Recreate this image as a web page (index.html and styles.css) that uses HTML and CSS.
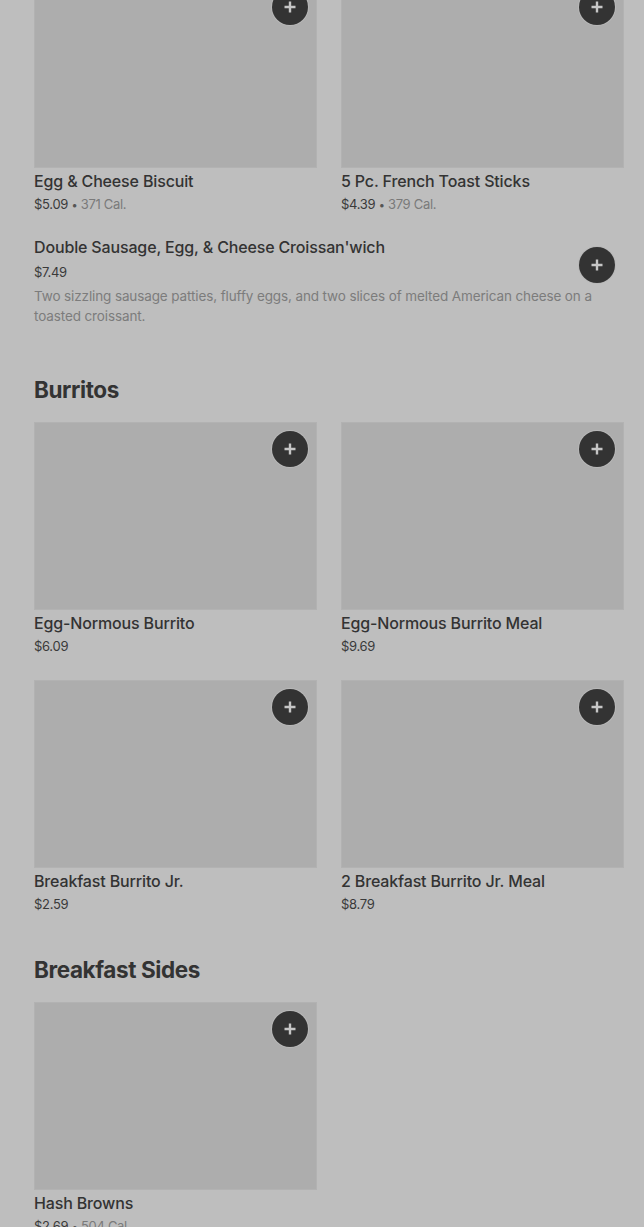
FILE: index.html
```html
<!DOCTYPE html>
<html>
<head>
<meta charset="utf-8">
<link rel="stylesheet" href="styles.css">
</head>
<body>
<div class="page">
  <section class="section first">
    <div class="grid">
      <div class="card">
        <div class="img"><button class="add"><svg viewBox="0 0 16 16" width="16" height="16"><path d="M8 2.5v11M2.5 8h11" stroke="currentColor" stroke-width="2.4" fill="none"/></svg></button></div>
        <div class="title">Egg &amp; Cheese Biscuit</div>
        <div class="price">$5.09 <span class="dot">•</span> <span class="cal">371 Cal.</span></div>
      </div>
      <div class="card">
        <div class="img"><button class="add"><svg viewBox="0 0 16 16" width="16" height="16"><path d="M8 2.5v11M2.5 8h11" stroke="currentColor" stroke-width="2.4" fill="none"/></svg></button></div>
        <div class="title">5 Pc. French Toast Sticks</div>
        <div class="price">$4.39 <span class="dot">•</span> <span class="cal">379 Cal.</span></div>
      </div>
    </div>
    <div class="row-item">
      <div class="row-text">
        <div class="title">Double Sausage, Egg, &amp; Cheese Croissan'wich</div>
        <div class="price row-price">$7.49</div>
      </div>
      <button class="add inline"><svg viewBox="0 0 16 16" width="16" height="16"><path d="M8 2.5v11M2.5 8h11" stroke="currentColor" stroke-width="2.4" fill="none"/></svg></button>
      <div class="desc">Two sizzling sausage patties, fluffy eggs, and two slices of melted American cheese on a toasted croissant.</div>
    </div>
  </section>

  <section class="section">
    <h2>Burritos</h2>
    <div class="grid">
      <div class="card">
        <div class="img"><button class="add"><svg viewBox="0 0 16 16" width="16" height="16"><path d="M8 2.5v11M2.5 8h11" stroke="currentColor" stroke-width="2.4" fill="none"/></svg></button></div>
        <div class="title">Egg-Normous Burrito</div>
        <div class="price">$6.09</div>
      </div>
      <div class="card">
        <div class="img"><button class="add"><svg viewBox="0 0 16 16" width="16" height="16"><path d="M8 2.5v11M2.5 8h11" stroke="currentColor" stroke-width="2.4" fill="none"/></svg></button></div>
        <div class="title">Egg-Normous Burrito Meal</div>
        <div class="price">$9.69</div>
      </div>
      <div class="card">
        <div class="img"><button class="add"><svg viewBox="0 0 16 16" width="16" height="16"><path d="M8 2.5v11M2.5 8h11" stroke="currentColor" stroke-width="2.4" fill="none"/></svg></button></div>
        <div class="title">Breakfast Burrito Jr.</div>
        <div class="price">$2.59</div>
      </div>
      <div class="card">
        <div class="img"><button class="add"><svg viewBox="0 0 16 16" width="16" height="16"><path d="M8 2.5v11M2.5 8h11" stroke="currentColor" stroke-width="2.4" fill="none"/></svg></button></div>
        <div class="title">2 Breakfast Burrito Jr. Meal</div>
        <div class="price">$8.79</div>
      </div>
    </div>
  </section>

  <section class="section sides">
    <h2>Breakfast Sides</h2>
    <div class="grid">
      <div class="card">
        <div class="img"><button class="add"><svg viewBox="0 0 16 16" width="16" height="16"><path d="M8 2.5v11M2.5 8h11" stroke="currentColor" stroke-width="2.4" fill="none"/></svg></button></div>
        <div class="title">Hash Browns</div>
        <div class="price">$2.69 <span class="dot">•</span> <span class="cal">504 Cal.</span></div>
      </div>
    </div>
  </section>
</div>
</body>
</html>
```

FILE: styles.css
```css
* { box-sizing: border-box; }
html, body {
  margin: 0;
  padding: 0;
  background: #bebebe;
  overflow: hidden;
}
body {
  font-family: Inter, "Noto Sans", "Liberation Sans", sans-serif;
  color: #333;
}
.page {
  width: 644px;
  padding: 0 20px 0 34px;
  margin-top: -20px;
}
.grid {
  display: grid;
  grid-template-columns: 283px 283px;
  column-gap: 24px;
  row-gap: 24px;
}
.card { display: flex; flex-direction: column; }
.img {
  position: relative;
  height: 188px;
  background: #adadad;
  border: 1px solid #b2b2b2;
}
.add {
  position: absolute;
  top: 8px;
  right: 8px;
  width: 36px;
  height: 36px;
  border-radius: 50%;
  border: none;
  padding: 0;
  background: #333333;
  color: #c6c6c6;
  display: flex;
  align-items: center;
  justify-content: center;
  box-shadow: 0 0 0 1px #b8b8b8;
}
.add.inline {
  position: static;
  margin: 10px 9px 0 0;
}
.title {
  margin-top: 3px;
  font-size: 16px;
  line-height: 20px;
  font-weight: 500;
  color: #333;
  letter-spacing: -0.15px;
}
.price {
  margin-top: 3px;
  font-size: 13px;
  line-height: 20px;
  color: #3a3a3a;
  letter-spacing: -0.3px;
}
.dot { color: #555; font-size: 11px; }
.cal { color: #7a7a7a; }
.row-item {
  display: grid;
  grid-template-columns: 1fr auto;
  margin-top: 22px;
}
.row-item .title { margin-top: 0; }
.row-price { margin-top: 5px; }
.desc {
  grid-column: 1 / -1;
  margin-top: 3px;
  padding-right: 8px;
  font-size: 13.5px;
  line-height: 20px;
  color: #7c7c7c;
  letter-spacing: -0.12px;
}
.section h2 {
  margin: 0 0 16px;
  font-size: 22.5px;
  line-height: 32px;
  font-weight: 700;
  color: #333;
  letter-spacing: -0.4px;
}
.section { padding-top: 48px; }
.section.first { padding-top: 0; }
.section.sides { padding-top: 40px; }
```
